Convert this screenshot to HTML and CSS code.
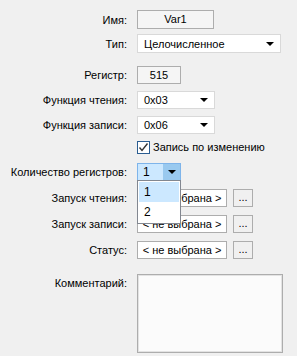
FILE: index.html
```html
<!DOCTYPE html>
<html>
<head>
 <title>Var1</title>
 <link rel="stylesheet" href="styles.css">
</head>
<body>
<div class="form">
	<div class="row row_name">
		<div class="lbl">Имя:</div>
		<div class="box box_name">Var1</div>
	</div>
	<div class="row row_type">
		<div class="lbl">Тип:</div>
		<div class="combo combo_type"><span class="combo_text">Целочисленное</span><span class="arrow"></span></div>
	</div>
	<div class="row row_reg">
		<div class="lbl">Регистр:</div>
		<div class="box box_reg">515</div>
	</div>
	<div class="row row_fn">
		<div class="lbl">Функция чтения:</div>
		<div class="combo combo_fn"><span class="combo_text">0x03</span><span class="arrow"></span></div>
	</div>
	<div class="row row_fn">
		<div class="lbl">Функция записи:</div>
		<div class="combo combo_fn"><span class="combo_text">0x06</span><span class="arrow"></span></div>
	</div>
	<div class="row row_check">
		<div class="lbl"></div>
		<div class="check_wrap">
			<span class="check"><svg width="11" height="11" viewBox="0 0 11 11"><path d="M1.5 5.5 L4 8.5 L9.5 1.5" fill="none" stroke="#333" stroke-width="1.4"/></svg></span>
			<span>Запись по изменению</span>
		</div>
	</div>
	<div class="row row_count">
		<div class="lbl">Количество регистров:</div>
		<div class="combo_open">
			<div class="combo_sel"><span class="sel_text">1</span><span class="sel_btn"><span class="arrow"></span></span></div>
			<div class="droplist">
				<div class="drop_item drop_item_on">1</div>
				<div class="drop_item">2</div>
			</div>
		</div>
	</div>
	<div class="row row_launch">
		<div class="lbl">Запуск чтения:</div>
		<div class="pick">&lt; не выбрана &gt;</div>
		<div class="dots">...</div>
	</div>
	<div class="row row_launch">
		<div class="lbl">Запуск записи:</div>
		<div class="pick">&lt; не выбрана &gt;</div>
		<div class="dots">...</div>
	</div>
	<div class="row row_launch">
		<div class="lbl">Статус:</div>
		<div class="pick">&lt; не выбрана &gt;</div>
		<div class="dots">...</div>
	</div>
	<div class="row row_comment">
		<div class="lbl lbl_top">Комментарий:</div>
		<div class="memo"></div>
	</div>
</div>
</body>
</html>
```

FILE: styles.css
```css
	body {
		margin: 0;
		background: #f0f0f0;
		font-family: "Liberation Sans", Arial, sans-serif;
		font-size: 11px;
		color: #000000;
	}

	.form {
		display: flex;
		flex-direction: column;
		padding-top: 10px;
	}

	.row {
		display: flex;
		align-items: center;
	}

	.lbl {
		width: 127px;
		margin-right: 10px;
		text-align: right;
		flex-shrink: 0;
	}

	.lbl_top {
		align-self: flex-start;
		padding-top: 3px;
	}

	.row_name { height: 19px; }
	.row_type { height: 19px; margin-top: 5px; }
	.row_reg { height: 18px; margin-top: 13px; }
	.row_fn { height: 18px; margin-top: 7px; }
	.row_check { height: 14px; margin-top: 6px; }
	.row_count { height: 18px; margin-top: 9px; position: relative; z-index: 2; }
	.row_launch { height: 18px; margin-top: 8px; }
	.row_comment { margin-top: 15px; }

	.box {
		box-sizing: border-box;
		height: 100%;
		border: 1px solid #adadad;
		background: #f5f5f5;
		text-align: center;
		line-height: 16px;
	}
	.box_name { width: 77px; line-height: 17px; }
	.box_reg { width: 44px; }

	.combo {
		box-sizing: border-box;
		height: 100%;
		border: 1px solid #d9d9d9;
		background: #ffffff;
		display: flex;
		align-items: center;
		justify-content: space-between;
		padding: 0 6px 0 6px;
	}
	.combo_type { width: 144px; }
	.combo_fn { width: 78px; }

	.arrow {
		width: 0;
		height: 0;
		border-left: 4px solid transparent;
		border-right: 4px solid transparent;
		border-top: 4px solid #000000;
	}

	.check_wrap {
		display: flex;
		align-items: center;
		gap: 3px;
	}
	.check {
		box-sizing: border-box;
		width: 13px;
		height: 13px;
		border: 1px solid #2b5d91;
		background: #ffffff;
		display: flex;
		align-items: center;
		justify-content: center;
	}

	.combo_open {
		position: relative;
		width: 44px;
		height: 100%;
	}
	.combo_sel {
		box-sizing: border-box;
		height: 100%;
		display: flex;
		border: 1px solid #7eb4ea;
		background: #cce8ff;
	}
	.sel_text {
		flex: 1;
		padding-left: 5px;
		line-height: 16px;
		font-size: 12px;
	}
	.sel_btn {
		width: 17px;
		background: #99c9ef;
		display: flex;
		align-items: center;
		justify-content: center;
	}

	.droplist {
		position: absolute;
		left: 0;
		top: 17px;
		box-sizing: border-box;
		width: 44px;
		border: 1px solid #828790;
		background: #ffffff;
		padding: 1px;
	}
	.drop_item {
		height: 20px;
		line-height: 20px;
		padding-left: 5px;
		font-size: 12px;
	}
	.drop_item_on { background: #cce8ff; }

	.pick {
		box-sizing: border-box;
		width: 90px;
		height: 100%;
		border: 1px solid #adadad;
		background: #ffffff;
		text-align: center;
		line-height: 16px;
		color: #000000;
	}
	.dots {
		box-sizing: border-box;
		width: 20px;
		height: 100%;
		margin-left: 6px;
		border: 1px solid #adadad;
		background: #f0f0f0;
		text-align: center;
		line-height: 14px;
	}

	.memo {
		box-sizing: border-box;
		width: 146px;
		height: 79px;
		border: 1px solid #adadad;
		box-shadow: inset 0 0 0 1px #e3e3e3;
		background: #fbfbfb;
	}
```
